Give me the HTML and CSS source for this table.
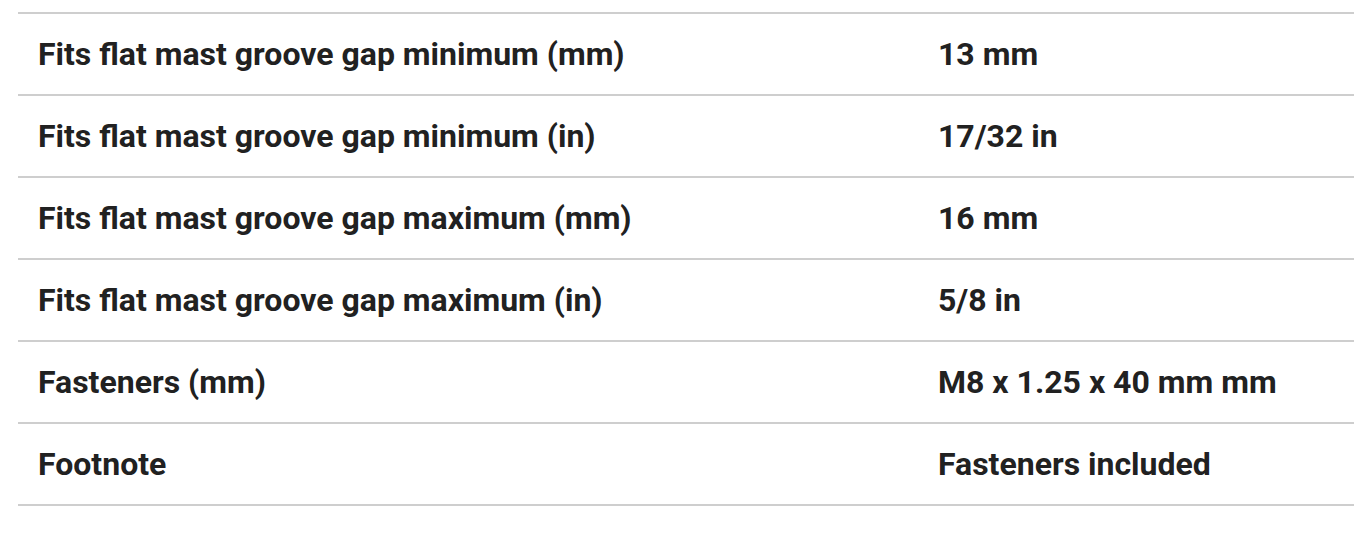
FILE: index.html
```html
<!DOCTYPE html>
<html lang="en">
<head>
<meta charset="utf-8">
<title>Specifications</title>
<link rel="stylesheet" href="styles.css">
</head>
<body>
<div class="page">
  <table class="specs">
    <tbody>
      <tr><th>Fits flat mast groove gap minimum (mm)</th><td>13 mm</td></tr>
      <tr><th>Fits flat mast groove gap minimum (in)</th><td>17/32 in</td></tr>
      <tr><th>Fits flat mast groove gap maximum (mm)</th><td>16 mm</td></tr>
      <tr><th>Fits flat mast groove gap maximum (in)</th><td>5/8 in</td></tr>
      <tr><th>Fasteners (mm)</th><td>M8 x 1.25 x 40 mm mm</td></tr>
      <tr><th>Footnote</th><td>Fasteners included</td></tr>
    </tbody>
  </table>
</div>
</body>
</html>
```

FILE: styles.css
```css
html, body {
  margin: 0;
  padding: 0;
  background: #ffffff;
}
.page {
  padding: 12px 0 0 18px;
  overflow: hidden;
}
.specs {
  width: calc(100% + 20px);
  border-collapse: collapse;
  font-family: Roboto, "Liberation Sans", sans-serif;
  font-weight: 700;
  font-size: 32px;
  color: #212121;
}
.specs tr {
  border-top: 2px solid #cecece;
  border-bottom: 2px solid #cecece;
}
.specs th,
.specs td {
  height: 80px;
  padding: 0 20px;
  text-align: left;
  vertical-align: middle;
  font-weight: 700;
  line-height: 1;
}
.specs th {
  width: 860px;
}
```
